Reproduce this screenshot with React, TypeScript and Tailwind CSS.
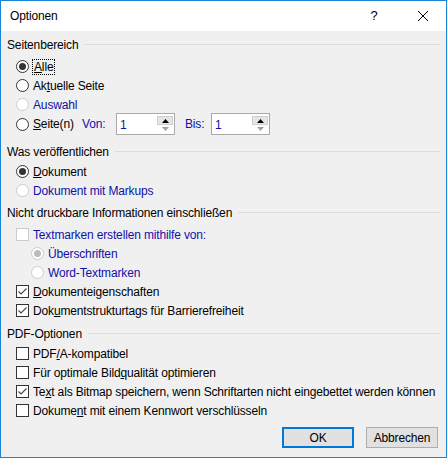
import React from 'react';

const BLUE = 'text-[#1010a8]';

function Header({ label, className = '' }: { label: string; className?: string }) {
  return (
    <div className={`flex items-center h-[19px] ${className}`}>
      <span className="whitespace-nowrap">{label}</span>
      <div className="flex-1 h-px bg-[#dcdcdc] ml-[6px]" />
    </div>
  );
}

function Radio({ checked = false, disabled = false }: { checked?: boolean; disabled?: boolean }) {
  return (
    <span
      className={`relative flex items-center justify-center w-[13px] h-[13px] rounded-full border bg-white shrink-0 ${
        disabled ? 'border-[#cccccc]' : 'border-[#333333]'
      }`}
    >
      {checked && (
        <span
          className={`w-[7px] h-[7px] rounded-full ${disabled ? 'bg-[#bcbcbc]' : 'bg-[#333333]'}`}
        />
      )}
    </span>
  );
}

function Check({ checked = false, disabled = false }: { checked?: boolean; disabled?: boolean }) {
  return (
    <span
      className={`flex items-center justify-center w-[13px] h-[13px] border bg-white shrink-0 ${
        disabled ? 'border-[#cccccc]' : 'border-[#333333]'
      }`}
    >
      {checked && (
        <svg width="11" height="11" viewBox="0 0 11 11">
          <path d="M1.5 5.5 L4 8 L9.5 2.5" fill="none" stroke="#444444" strokeWidth="1.1" />
        </svg>
      )}
    </span>
  );
}

function Row({
  control,
  children,
  indent = 'pl-[9px]',
  blue = false,
  className = '',
}: {
  control: React.ReactNode;
  children: React.ReactNode;
  indent?: string;
  blue?: boolean;
  className?: string;
}) {
  return (
    <div className={`flex items-center h-[19px] ${indent} ${className}`}>
      {control}
      <span className={`ml-[4px] whitespace-nowrap ${blue ? BLUE : ''}`}>{children}</span>
    </div>
  );
}

function SpinBox() {
  return (
    <div className="flex w-[59px] h-[22px] border border-[#a9a9a9] bg-white">
      <span className={`flex-1 pl-[3px] pt-[3px] leading-[16px] ${BLUE}`}>1</span>
      <div className="flex flex-col w-[16px] my-[2px] mr-[1px]">
        <div className="flex-1 flex items-center justify-center bg-[#e5e5e5] border border-[#cfcfcf]">
          <svg width="7" height="4" viewBox="0 0 7 4">
            <path d="M0 4 L3.5 0 L7 4 Z" fill="#000" />
          </svg>
        </div>
        <div className="flex-1 flex items-center justify-center">
          <svg width="7" height="4" viewBox="0 0 7 4">
            <path d="M0 0 L3.5 4 L7 0 Z" fill="#a0a0a0" />
          </svg>
        </div>
      </div>
    </div>
  );
}

export default function App() {
  return (
    <div
      className="w-[447px] h-[458px] border border-[#1883d7] bg-[#f0f0f0] flex flex-col text-[12px] tracking-[-0.15px] text-black"
      style={{ fontFamily: '"Liberation Sans", Arial, sans-serif' }}
    >
      {/* Title bar */}
      <div className="h-[30px] bg-white flex items-center pl-[9px]">
        <span className="flex-1">Optionen</span>
        <span className="w-[12px] text-center mr-[38px] text-[13px]">?</span>
        <svg width="10" height="10" viewBox="0 0 10 10" className="mr-[18px]">
          <path d="M0 0 L10 10 M10 0 L0 10" stroke="#000" strokeWidth="1" />
        </svg>
      </div>

      <div className="flex flex-col pl-[6px] pr-[6px]">
        <Header label="Seitenbereich" className="mt-[4px]" />
        <Row control={<Radio checked />} className="mt-[3px]">
          <span className="outline outline-1 outline-dotted outline-black px-[1px]">
            <u>A</u>lle
          </span>
        </Row>
        <Row control={<Radio />}>
          Ak<u>t</u>uelle Seite
        </Row>
        <Row control={<Radio disabled />} blue>
          Auswahl
        </Row>
        <div className="flex items-center h-[22px] pl-[9px] -mt-[1px]">
          <Radio />
          <span className="ml-[4px] w-[49px]">
            <u>S</u>eite(n)
          </span>
          <span className={`w-[34px] ${BLUE}`}>Von:</span>
          <SpinBox />
          <span className={`ml-[10px] w-[26px] ${BLUE}`}>Bis:</span>
          <SpinBox />
        </div>

        <Header label="Was veröffentlichen" className="mt-[7px]" />
        <Row control={<Radio checked />} className="mt-[1px]">
          <u>D</u>okument
        </Row>
        <Row control={<Radio disabled />} blue>
          Dokument mit Markups
        </Row>

        <Header label="Nicht druckbare Informationen einschließen" className="mt-[3px]" />
        <Row control={<Check disabled />} blue className="mt-[3px]">
          Textmarken erstellen mithilfe von:
        </Row>
        <Row control={<Radio checked disabled />} indent="pl-[24px]" blue>
          Überschriften
        </Row>
        <Row control={<Radio disabled />} indent="pl-[24px]" blue>
          Word-Textmarken
        </Row>
        <Row control={<Check checked />}>
          <u>D</u>okumenteigenschaften
        </Row>
        <Row control={<Check checked />}>
          Dok<u>u</u>mentstrukturtags für Barrierefreiheit
        </Row>

        <Header label="PDF-Optionen" className="mt-[4px]" />
        <Row control={<Check />} className="mt-[1px]">
          PDF<u>/</u>A-kompatibel
        </Row>
        <Row control={<Check />}>
          Für optimale Bild<u>q</u>ualität optimieren
        </Row>
        <Row control={<Check checked />}>
          Te<u>x</u>t als Bitmap speichern, wenn Schriftarten nicht eingebettet werden können
        </Row>
        <Row control={<Check />}>
          Dokume<u>n</u>t mit einem Kennwort verschlüsseln
        </Row>

        <div className="flex justify-end mt-[7px] pr-[2px] gap-[12px]">
          <button className="w-[72px] h-[21px] bg-[#e1e1e1] border-2 border-[#0078d7] leading-none">
            OK
          </button>
          <button className="w-[72px] h-[21px] bg-[#e1e1e1] border border-[#adadad] leading-none">
            Abbrechen
          </button>
        </div>
      </div>
    </div>
  );
}
